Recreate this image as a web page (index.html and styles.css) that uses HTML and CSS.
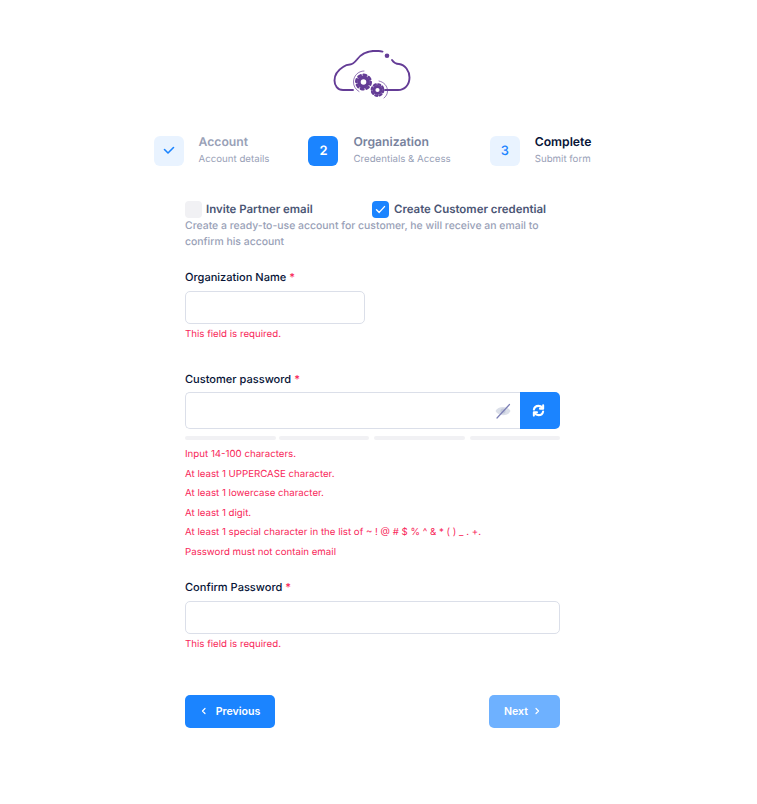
FILE: index.html
```html
<!DOCTYPE html>
<html lang="en">
<head>
    <meta charset="UTF-8">
    <meta name="viewport" content="width=device-width, initial-scale=1.0">
    <title>Create Organization</title>
    <link rel="stylesheet" href="styles.css">
</head>
<body>
    <div class="page">
        <div class="logo">
            <svg width="80" height="50" viewBox="0 0 80 50" fill="none" stroke="#643c96" stroke-linecap="round">
                <path d="M20 40 H10 C4.5 40 1.5 35.5 1.5 30.5 C1.5 24 6 19.5 10 17 C12 15.5 15 14.5 17 14.5 C20 14.5 22 12 24 9.5 C28 4 35 1 42 0.8 C45 0.8 47 1 49.5 1.6" stroke-width="1.9"/>
                <circle cx="54" cy="5.8" r="2.3" fill="#643c96" stroke="none"/>
                <path d="M59 10 C61 13 63 14 66 14 C72 14.5 76.5 21 76.5 27.5 C76.5 35 71.5 40 65 40 H52" stroke-width="1.9"/>
                <circle cx="30.5" cy="32" r="4.6" stroke-width="3.6"/>
                <circle cx="30.5" cy="32" r="7.2" stroke-width="2.6" stroke-dasharray="2.6 3.05"/>
                <circle cx="44.5" cy="40" r="3.6" stroke-width="3"/>
                <circle cx="44.5" cy="40" r="5.8" stroke-width="2.2" stroke-dasharray="2.2 2.35"/>
                <path d="M31 21 C25 21 20.5 26 20.5 32 C20.5 36 22.5 39.5 26 41.5" stroke-width="0.7"/>
                <path d="M46 31 C51 32 54.5 36 54.5 41 C54.5 44 53 46.5 51 48" stroke-width="0.7"/>
            </svg>
        </div>

        <div class="stepper">
            <div class="step done">
                <div class="step-icon">
                    <svg width="14" height="14" viewBox="0 0 14 14" fill="none" stroke="#1b84ff" stroke-width="1.6" stroke-linecap="round" stroke-linejoin="round"><path d="M2.5 5.5 L6 9 L11.5 3.5"/></svg>
                </div>
                <div class="step-text">
                    <h3>Account</h3>
                    <p>Account details</p>
                </div>
            </div>
            <div class="step current">
                <div class="step-icon">2</div>
                <div class="step-text">
                    <h3>Organization</h3>
                    <p>Credentials &amp; Access</p>
                </div>
            </div>
            <div class="step todo">
                <div class="step-icon">3</div>
                <div class="step-text">
                    <h3>Complete</h3>
                    <p>Submit form</p>
                </div>
            </div>
        </div>

        <form class="form">
            <div class="choices">
                <label class="choice choice-first">
                    <span class="box"></span>
                    Invite Partner email
                </label>
                <label class="choice">
                    <span class="box checked">
                        <svg width="13" height="13" viewBox="0 0 13 13" fill="none" stroke="#fff" stroke-width="1.4" stroke-linecap="round" stroke-linejoin="round"><path d="M2.5 6.8 L5.2 9.4 L10.5 3.6"/></svg>
                    </span>
                    Create Customer credential
                </label>
            </div>
            <p class="hint">Create a ready-to-use account for customer, he will receive an email to confirm his account</p>

            <div class="field field-org">
                <label class="field-label">Organization Name <span class="req">*</span></label>
                <input class="input input-short" type="text">
                <div class="error">This field is required.</div>
            </div>

            <div class="field field-password">
                <label class="field-label">Customer password <span class="req">*</span></label>
                <div class="password-row">
                    <div class="password-box">
                        <svg class="eye" width="18" height="18" viewBox="0 0 18 18" fill="none">
                            <path d="M1.5 9 C4 3.5 14 3.5 16.5 9 C14 14.5 4 14.5 1.5 9 Z" fill="#dbdfe9"/>
                            <circle cx="9" cy="9" r="2.6" fill="#c4cadb"/>
                            <path d="M3 16 L15.5 2.5" stroke="#7c7fb5" stroke-width="1.2" stroke-linecap="round"/>
                        </svg>
                    </div>
                    <button class="refresh" type="button">
                        <svg width="13" height="13" viewBox="0 0 14 14" fill="none" stroke="#fff" stroke-width="2.2" stroke-linecap="round" stroke-linejoin="round">
                            <path d="M2 6 C2.5 3.5 4.5 2 7 2 C8.8 2 10.2 2.8 11.2 4.2"/>
                            <path d="M12 1.5 V5 H8.6"/>
                            <path d="M12 8 C11.5 10.5 9.5 12 7 12 C5.2 12 3.8 11.2 2.8 9.8"/>
                            <path d="M2 12.5 V9 H5.4"/>
                        </svg>
                    </button>
                </div>
                <div class="meter">
                    <span></span><span></span><span></span><span></span>
                </div>
                <ul class="rules">
                    <li>Input 14-100 characters.</li>
                    <li>At least 1 UPPERCASE character.</li>
                    <li>At least 1 lowercase character.</li>
                    <li>At least 1 digit.</li>
                    <li>At least 1 special character in the list of ~ ! @ # $ % ^ &amp; * ( ) _ . +.</li>
                    <li>Password must not contain email</li>
                </ul>
            </div>

            <div class="field field-confirm">
                <label class="field-label">Confirm Password <span class="req">*</span></label>
                <input class="input" type="text">
                <div class="error">This field is required.</div>
            </div>

            <div class="actions">
                <button class="btn btn-prev" type="button">
                    <svg width="6" height="8" viewBox="0 0 6 8" fill="none" stroke="#fff" stroke-width="1.2" stroke-linecap="round" stroke-linejoin="round"><path d="M4 1.5 L1.5 4 L4 6.5"/></svg>
                    Previous
                </button>
                <button class="btn btn-next" type="button">
                    Next
                    <svg width="6" height="8" viewBox="0 0 6 8" fill="none" stroke="#fff" stroke-width="1.2" stroke-linecap="round" stroke-linejoin="round"><path d="M2 1.5 L4.5 4 L2 6.5"/></svg>
                </button>
            </div>
        </form>
    </div>
</body>
</html>
```

FILE: styles.css
```css
* {
    margin: 0;
    padding: 0;
    box-sizing: border-box;
}

body {
    font-family: Inter, "Liberation Sans", sans-serif;
    background-color: #fff;
    color: #071437;
    text-rendering: geometricPrecision;
}

.page {
    width: 745px;
    height: 804px;
    padding-top: 50px;
    overflow: hidden;
}

/* Logo */
.logo {
    display: flex;
    justify-content: center;
    height: 50px;
}

/* Stepper */
.stepper {
    display: flex;
    justify-content: center;
    gap: 39px;
    margin-top: 36px;
}

.step {
    display: flex;
    align-items: center;
    gap: 15px;
    height: 30px;
}

.step-icon {
    width: 30px;
    height: 30px;
    border-radius: 6px;
    display: flex;
    align-items: center;
    justify-content: center;
    background-color: #e9f3ff;
    color: #1b84ff;
    font-size: 13px;
    font-weight: 600;
}

.step-text {
    padding-bottom: 3px;
}

.step h3 {
    font-size: 12.2px;
    line-height: 16px;
    font-weight: 600;
    color: #99a1b7;
}

.step p {
    font-size: 9.7px;
    line-height: 13px;
    margin-top: 3px;
    color: #99a1b7;
}

.step.current .step-icon {
    background-color: #1b84ff;
    color: #fff;
}

.step.current h3 {
    color: #78829d;
}

.step.todo h3 {
    color: #071437;
}

.step.todo .step-icon {
    font-weight: 500;
}

/* Form */
.form {
    width: 375px;
    margin: 34px auto 0;
}

.choices {
    display: flex;
    height: 18px;
}

.choice {
    display: flex;
    align-items: center;
    gap: 5px;
    font-size: 11.44px;
    font-weight: 600;
    color: #4b5675;
}

.choice-first {
    width: 187px;
    gap: 4px;
}

.box {
    width: 17px;
    height: 17px;
    border-radius: 4px;
    background-color: #f1f1f4;
    display: flex;
    align-items: center;
    justify-content: center;
}

.box.checked {
    background-color: #1b84ff;
}

.hint {
    font-size: 10.44px;
    font-weight: 500;
    line-height: 16px;
    color: #99a1b7;
}

.field-org {
    margin-top: 20px;
}

.field-password {
    margin-top: 31px;
}

.field-confirm {
    margin-top: 21px;
}

.field-label {
    display: block;
    font-size: 11.05px;
    font-weight: 500;
    line-height: 14px;
    color: #071437;
}

.req {
    color: #f8285a;
}

.input {
    display: block;
    width: 100%;
    height: 33px;
    margin-top: 7px;
    border: 1px solid #dbdfe9;
    border-radius: 5px;
    background-color: #fff;
}

.input-short {
    width: 180px;
}

.error {
    font-size: 9.7px;
    line-height: 12px;
    color: #f8285a;
    margin-top: 5px;
}

.password-row {
    display: flex;
    height: 37px;
    margin-top: 6px;
}

.password-box {
    flex: 1;
    display: flex;
    align-items: center;
    justify-content: flex-end;
    padding-right: 8px;
    border: 1px solid #dbdfe9;
    border-right: none;
    border-radius: 5px 0 0 5px;
}

.refresh {
    width: 40px;
    padding-right: 4px;
    border: none;
    border-radius: 0 5px 5px 0;
    background-color: #1b84ff;
    display: flex;
    align-items: center;
    justify-content: center;
}

.meter {
    display: flex;
    gap: 3px;
    margin-top: 7px;
}

.meter span {
    flex: 1;
    height: 4px;
    border-radius: 2px;
    background-color: #f1f1f4;
}

.meter span + span + span {
    margin-left: 2px;
}

.rules {
    list-style: none;
    margin-top: 9px;
    font-size: 9.7px;
    color: #f8285a;
}

.rules li {
    line-height: 12px;
    margin-bottom: 7.5px;
}

.actions {
    display: flex;
    justify-content: space-between;
    margin-top: 44px;
}

.btn {
    height: 33px;
    border: none;
    border-radius: 5px;
    color: #fff;
    font-family: inherit;
    font-size: 10.6px;
    font-weight: 600;
    display: flex;
    align-items: center;
    justify-content: center;
}

.btn-prev {
    width: 90px;
    gap: 9px;
    padding-left: 1px;
    background-color: #1b84ff;
}

.btn-next {
    width: 71px;
    gap: 6px;
    padding-right: 5px;
    background-color: #6eb1ff;
}
```
